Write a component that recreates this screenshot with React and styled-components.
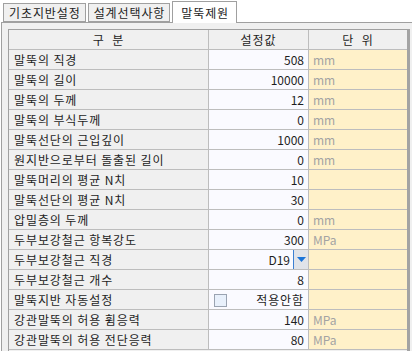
import styled, { createGlobalStyle } from 'styled-components';

const GlobalStyle = createGlobalStyle`
  html, body {
    margin: 0;
    padding: 0;
    background: #ffffff;
  }
  body {
    font-family: 'Noto Sans CJK KR', 'Noto Sans', sans-serif;
    font-size: 12px;
    color: #1e1e1e;
  }
`;

const StyledWindow = styled.div`
  width: 412px;
  height: 351px;
  overflow: hidden;
  background: #ffffff;
  display: flex;
  flex-direction: column;
`;

const StyledTabBar = styled.div`
  display: flex;
  align-items: flex-end;
  height: 22px;
  padding-left: 3px;
  gap: 2px;
  position: relative;
  z-index: 1;
`;

const StyledTab = styled.div`
  box-sizing: border-box;
  height: ${({ active }) => (active ? '22px' : '19px')};
  margin-bottom: ${({ active }) => (active ? '-1px' : '0')};
  padding: 0 ${({ active }) => (active ? '7px' : '4px')} 0 ${({ active }) => (active ? '8px' : '5px')};
  border: 1px solid #a0a0a0;
  border-bottom: ${({ active }) => (active ? 'none' : '1px solid #a0a0a0')};
  background: ${({ active }) => (active ? '#ffffff' : '#f0f0f0')};
  display: flex;
  align-items: center;
  line-height: 1;
  letter-spacing: 0.9px;
  white-space: nowrap;
`;

const StyledPanel = styled.div`
  flex: 1;
  border-top: 1px solid #a0a0a0;
  border-left: 1px solid #a0a0a0;
  margin-left: 1px;
  background: #f0f0f0;
  padding: 6px 0 0 6px;
  display: flex;
`;

const StyledGrid = styled.div`
  width: 398px;
  border-top: 1px solid #a0a0a0;
  border-left: 1px solid #a0a0a0;
  border-right: 3px solid #a3a3a3;
  display: flex;
  flex-direction: column;
`;

const StyledRow = styled.div`
  display: grid;
  grid-template-columns: 200px 100px 98px;
  height: 20px;
  box-sizing: border-box;
  border-bottom: 1px solid #bdbdbd;
`;

const StyledHeadCell = styled.div`
  background: #f0f0f0;
  border-right: ${({ last }) => (last ? 'none' : '1px solid #bdbdbd')};
  display: flex;
  align-items: center;
  justify-content: center;
  letter-spacing: 0.9px;
  word-spacing: 4px;
  line-height: 1;
`;

const StyledLabelCell = styled.div`
  background: #f0f0f0;
  border-right: 1px solid #bdbdbd;
  display: flex;
  align-items: center;
  padding-left: 5px;
  letter-spacing: 0.9px;
  line-height: 1;
  white-space: nowrap;
`;

const StyledValueCell = styled.div`
  position: relative;
  background: #fafaff;
  border-right: 1px solid #bdbdbd;
  display: flex;
  align-items: center;
  justify-content: flex-end;
  padding-right: ${({ combo }) => (combo ? '18px' : '4px')};
  letter-spacing: ${({ check }) => (check ? '0.9px' : '0')};
  line-height: 1;
`;

const StyledUnitCell = styled.div`
  background: #fff1c9;
  display: flex;
  align-items: center;
  padding-left: 4px;
  color: #a3a3a3;
  line-height: 1;
`;

const StyledDropButton = styled.div`
  position: absolute;
  top: 0;
  right: 0;
  bottom: 0;
  width: 15px;
  box-sizing: border-box;
  border-left: 1px solid #3c7fd2;
  background: #e0e3e9;
  display: flex;
  align-items: center;
  justify-content: center;
`;

const StyledCheckbox = styled.span`
  position: absolute;
  left: 5px;
  top: 4px;
  width: 11px;
  height: 11px;
  border: 1px solid #9aa3b1;
  background: #e8f0fb;
`;

const ROWS = [
  { label: '말뚝의 직경', value: '508', unit: 'mm' },
  { label: '말뚝의 길이', value: '10000', unit: 'mm' },
  { label: '말뚝의 두께', value: '12', unit: 'mm' },
  { label: '말뚝의 부식두께', value: '0', unit: 'mm' },
  { label: '말뚝선단의 근입깊이', value: '1000', unit: 'mm' },
  { label: '원지반으로부터 돌출된 길이', value: '0', unit: 'mm' },
  { label: '말뚝머리의 평균 N치', value: '10', unit: '' },
  { label: '말뚝선단의 평균 N치', value: '30', unit: '' },
  { label: '압밀층의 두께', value: '0', unit: 'mm' },
  { label: '두부보강철근 항복강도', value: '300', unit: 'MPa' },
  { label: '두부보강철근 직경', value: 'D19', unit: '', combo: true },
  { label: '두부보강철근 개수', value: '8', unit: '' },
  { label: '말뚝지반 자동설정', value: '적용안함', unit: '', check: true },
  { label: '강관말뚝의 허용 휨응력', value: '140', unit: 'MPa' },
  { label: '강관말뚝의 허용 전단응력', value: '80', unit: 'MPa' },
];

function App() {
  return (
    <StyledWindow>
      <GlobalStyle />
      <StyledTabBar>
        <StyledTab>기초지반설정</StyledTab>
        <StyledTab>설계선택사항</StyledTab>
        <StyledTab active>말뚝제원</StyledTab>
      </StyledTabBar>
      <StyledPanel>
        <StyledGrid>
          <StyledRow>
            <StyledHeadCell>구 분</StyledHeadCell>
            <StyledHeadCell>설정값</StyledHeadCell>
            <StyledHeadCell last>단 위</StyledHeadCell>
          </StyledRow>
          {ROWS.map((row) => (
            <StyledRow key={row.label}>
              <StyledLabelCell>{row.label}</StyledLabelCell>
              <StyledValueCell combo={row.combo} check={row.check}>
                {row.check && <StyledCheckbox />}
                {row.value}
                {row.combo && (
                  <StyledDropButton>
                    <svg width="9" height="5" viewBox="0 0 9 5">
                      <path d="M0 0 H9 L4.5 5 Z" fill="#1b74d8" />
                    </svg>
                  </StyledDropButton>
                )}
              </StyledValueCell>
              <StyledUnitCell>{row.unit}</StyledUnitCell>
            </StyledRow>
          ))}
        </StyledGrid>
      </StyledPanel>
    </StyledWindow>
  );
}

export default App;
